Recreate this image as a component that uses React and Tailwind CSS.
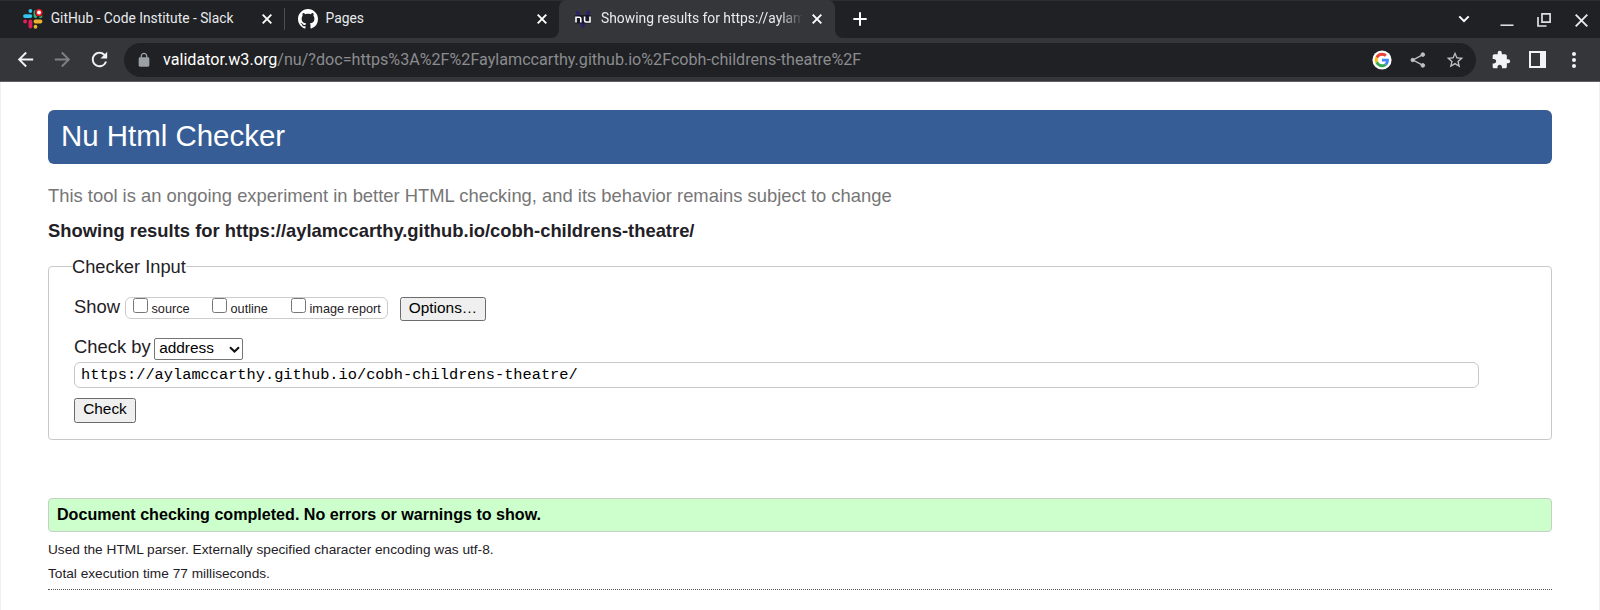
import React from "react";

const sans = "font-['Liberation_Sans',Arial,sans-serif]";

function CloseIcon() {
  return (
    <svg className="block shrink-0" width="10" height="10" viewBox="0 0 10 10" fill="none" stroke="#fff" strokeWidth="1.9">
      <path d="M0.7 0.7 9.3 9.3M9.3 0.7 0.7 9.3" />
    </svg>
  );
}

function SlackIcon() {
  return (
    <svg className="block shrink-0" width="20" height="20" viewBox="0 0 20 20">
      <g strokeWidth="3.8" strokeLinecap="round" fill="none">
        <path d="M7.4 2v.1M2 7.1h5.4" stroke="#36c5f0" />
        <path d="M12.5 3v4.1M17.4 7.1h.2" stroke="#2eb67d" />
        <path d="M12.5 12.5h5M12.5 17.7v.1" stroke="#ecb22e" />
        <path d="M7.4 12.5v5M2.1 12.5h.1" stroke="#e01e5a" />
      </g>
      <circle cx="16" cy="3.6" r="4.2" fill="#202124" />
      <circle cx="16" cy="3.6" r="2.8" fill="#fff" stroke="#f0141e" strokeWidth="1.6" />
    </svg>
  );
}

function GithubIcon() {
  return (
    <svg className="block shrink-0" width="20" height="20" viewBox="0 0 16 16" fill="#fff">
      <path d="M8 0C3.58 0 0 3.58 0 8c0 3.54 2.29 6.53 5.47 7.59.4.07.55-.17.55-.38 0-.19-.01-.82-.01-1.49-2.01.37-2.53-.49-2.69-.94-.09-.23-.48-.94-.82-1.13-.28-.15-.68-.52-.01-.53.63-.01 1.08.58 1.23.82.72 1.21 1.87.87 2.33.66.07-.52.28-.87.51-1.07-1.78-.2-3.64-.89-3.64-3.95 0-.87.31-1.59.82-2.15-.08-.2-.36-1.02.08-2.12 0 0 .67-.21 2.2.82.64-.18 1.32-.27 2-.27s1.36.09 2 .27c1.53-1.04 2.2-.82 2.2-.82.44 1.1.16 1.92.08 2.12.51.56.82 1.27.82 2.15 0 3.07-1.87 3.75-3.65 3.95.29.25.54.73.54 1.48 0 1.07-.01 1.93-.01 2.2 0 .21.15.46.55.38A8.01 8.01 0 0 0 16 8c0-4.42-3.58-8-8-8Z" />
    </svg>
  );
}

function NuIcon() {
  return (
    <svg className="block shrink-0" width="18" height="18" viewBox="0 0 18 18" fill="none">
      <path d="M3 1 9 15.5 15 1" stroke="#27236b" strokeWidth="3.2" />
      <path d="M1 5h16v8.5H1z" fill="#101018" opacity=".7" />
      <path d="M2 12.6V7.2h3.2q1.6 0 1.6 1.6v3.8M10.6 6.4v4.2q0 1.4 1.4 1.4h4V6.4" stroke="#fff" strokeWidth="1.6" />
    </svg>
  );
}

function GoogleIcon() {
  return (
    <svg className="block shrink-0" width="20" height="20" viewBox="0 0 20 20">
      <circle cx="10" cy="10" r="9.6" fill="#fff" />
      <g transform="translate(2.8 2.8) scale(.3)">
        <path fill="#ea4335" d="M24 9.5c3.54 0 6.71 1.22 9.21 3.6l6.85-6.85C35.9 2.38 30.47 0 24 0 14.62 0 6.51 5.38 2.56 13.22l7.98 6.19C12.43 13.72 17.74 9.5 24 9.5z" />
        <path fill="#4285f4" d="M46.98 24.55c0-1.57-.15-3.09-.38-4.55H24v9.02h12.94c-.58 2.96-2.26 5.48-4.78 7.18l7.73 6c4.51-4.18 7.09-10.36 7.09-17.65z" />
        <path fill="#fbbc05" d="M10.53 28.59c-.48-1.45-.76-2.99-.76-4.59s.27-3.14.76-4.59l-7.98-6.19C.92 16.46 0 20.12 0 24c0 3.88.92 7.54 2.56 10.78l7.97-6.19z" />
        <path fill="#34a853" d="M24 48c6.48 0 11.93-2.13 15.89-5.81l-7.73-6c-2.15 1.45-4.92 2.3-8.16 2.3-6.26 0-11.57-4.22-13.47-9.91l-7.98 6.19C6.51 42.62 14.62 48 24 48z" />
      </g>
    </svg>
  );
}

function MaterialIcon({ size, color, d, className = "" }) {
  return (
    <svg className={`block shrink-0 ${className}`} width={size} height={size} viewBox="0 0 24 24" fill={color}>
      <path d={d} />
    </svg>
  );
}

function TabBar() {
  return (
    <div className="flex h-[38px] border-t border-[#2d2e31] bg-[#202124] text-[13.85px] text-[#e8eaed]">
      <div className="flex h-[36px] w-[284px] items-center pr-[12px] pl-[23px]">
        <SlackIcon />
        <span className="ml-[7.7px] grow pb-[2px] text-[13.8px] whitespace-nowrap">GitHub - Code Institute - Slack</span>
        <CloseIcon />
      </div>
      <div className="mt-[7px] h-[22px] w-px bg-[#4d4e52]" />
      <div className="flex h-[36px] w-[274px] items-center pr-[12px] pl-[13px]">
        <GithubIcon />
        <span className="ml-[7.5px] grow pb-[2px] whitespace-nowrap">Pages</span>
        <CloseIcon />
      </div>
      <div className="relative -mt-px flex h-[38px] w-[276px] items-center rounded-t-[8px] bg-[#35363a] pr-[13px] pb-px pl-[15px]">
        <svg className="absolute bottom-0 -left-2" width="8" height="8" viewBox="0 0 8 8">
          <path d="M8 0v8H0A8 8 0 0 0 8 0Z" fill="#35363a" />
        </svg>
        <svg className="absolute -right-2 bottom-0" width="8" height="8" viewBox="0 0 8 8">
          <path d="M0 0v8h8A8 8 0 0 1 0 0Z" fill="#35363a" />
        </svg>
        <NuIcon />
        <span className="mr-[9px] ml-[9px] w-0 grow overflow-hidden [mask-image:linear-gradient(to_right,#000_88%,transparent)] whitespace-nowrap">
          Showing results for https://aylam
        </span>
        <CloseIcon />
      </div>
      <svg className="mt-[11px] ml-[18px] block" width="14" height="14" viewBox="0 0 14 14" stroke="#fff" strokeWidth="2">
        <path d="M7 .3v13.4M.3 7h13.4" />
      </svg>
      <div className="ml-auto flex h-[36px] items-center pr-[12px]">
        <svg className="mr-[30px] block" width="12" height="8" viewBox="0 0 12 8" fill="none" stroke="#fff" strokeWidth="2">
          <path d="M1.3 1.4 6 6.1l4.7-4.7" />
        </svg>
        <svg className="mr-[23px] block" width="14" height="14" viewBox="0 0 14 14">
          <path d="M.5 13.2h13" stroke="#e8eaed" strokeWidth="1.5" />
        </svg>
        <svg className="mt-[1px] mr-[24px] block" width="14" height="14" viewBox="0 0 14 14" fill="none" stroke="#dfe1e5" strokeWidth="1.7">
          <path d="M5 .9h8.1v8.2H5zM1 4v9h8.5" />
        </svg>
        <svg className="mt-[2px] block" width="13" height="13" viewBox="0 0 13 13" stroke="#e8eaed" strokeWidth="1.9">
          <path d="M.7.7 12.3 12.3M12.3.7.7 12.3" />
        </svg>
      </div>
    </div>
  );
}

function Toolbar() {
  return (
    <div className="flex h-[44px] items-center border-b border-[#606165] bg-[#35363a] pr-[15px] pl-[14px]">
      <MaterialIcon size={23} color="#f1f3f4" d="M20 11H7.83l5.59-5.59L12 4l-8 8 8 8 1.41-1.41L7.83 13H20v-2z" />
      <MaterialIcon size={23} color="#7f8084" className="ml-[14px]" d="m12 4-1.41 1.41L16.17 11H4v2h12.17l-5.58 5.59L12 20l8-8z" />
      <MaterialIcon size={23} color="#f1f3f4" className="ml-[14px]" d="M17.65 6.35A7.958 7.958 0 0 0 12 4c-4.42 0-7.99 3.58-7.99 8s3.57 8 7.99 8c3.73 0 6.84-2.55 7.73-6h-2.08A5.99 5.99 0 0 1 12 18c-3.31 0-6-2.69-6-6s2.69-6 6-6c1.66 0 3.14.69 4.22 1.78L13 11h7V4l-2.35 2.35z" />
      <div className="ml-[13px] flex h-[34px] w-[1352px] items-center rounded-full bg-[#202124] pr-[11px] pl-[12px]">
        <MaterialIcon size={16} color="#9aa0a6" d="M18 8h-1V6c0-2.76-2.24-5-5-5S7 3.24 7 6v2H6c-1.1 0-2 .9-2 2v10c0 1.1.9 2 2 2h12c1.1 0 2-.9 2-2V10c0-1.1-.9-2-2-2zM9 6c0-1.66 1.34-3 3-3s3 1.34 3 3v2H9V6z" />
        <div className="ml-[11px] grow text-[16.14px] leading-[20px] whitespace-nowrap text-[#8b8c8f]">
          <span className="text-[#fff]">validator.w3.org</span>
          /nu/?doc=https%3A%2F%2Faylamccarthy.github.io%2Fcobh-childrens-theatre%2F
        </div>
        <GoogleIcon />
        <svg className="ml-[18px] block shrink-0" width="16" height="16" viewBox="0 0 16 16" fill="#bdc1c6" stroke="#bdc1c6">
          <path d="M13 2.7 3 8l10 5.3" fill="none" strokeWidth="1.4" />
          <circle cx="12.8" cy="2.6" r="1.8" />
          <circle cx="2.7" cy="8" r="1.7" />
          <circle cx="12.8" cy="13.4" r="1.8" />
        </svg>
        <MaterialIcon size={20} color="#bdc1c6" className="ml-[19px]" d="m22 9.24-7.19-.62L12 2 9.19 8.63 2 9.24l5.46 4.73L5.82 21 12 17.27 18.18 21l-1.63-7.03L22 9.24zM12 15.4l-3.76 2.27 1-4.28-3.32-2.88 4.38-.38L12 6.1l1.71 4.04 4.38.38-3.32 2.88 1 4.28L12 15.4z" />
      </div>
      <MaterialIcon size={20} color="#f1f3f4" className="ml-[15px]" d="M20.5 11H19V7c0-1.1-.9-2-2-2h-4V3.5a2.5 2.5 0 0 0-5 0V5H4c-1.1 0-1.99.9-1.99 2v3.8H3.5c1.49 0 2.7 1.21 2.7 2.7s-1.21 2.7-2.7 2.7H2V20c0 1.1.9 2 2 2h3.8v-1.5c0-1.49 1.21-2.7 2.7-2.7s2.7 1.21 2.7 2.7V22H17c1.1 0 2-.9 2-2v-4h1.5a2.5 2.5 0 0 0 0-5z" />
      <svg className="ml-[18px] block" width="17" height="17" viewBox="0 0 17 17">
        <path fillRule="evenodd" fill="#f1f3f4" d="M0 0h17v17H0zM2 2v13h9V2z" />
      </svg>
      <svg className="ml-auto block" width="22" height="18" viewBox="0 0 22 18" fill="#f1f3f4">
        <circle cx="11" cy="3" r="2" />
        <circle cx="11" cy="9" r="2" />
        <circle cx="11" cy="15" r="2" />
      </svg>
    </div>
  );
}

function ShowOption({ label, className }) {
  return (
    <label className={`flex ${className}`}>
      <input type="checkbox" className="h-[15px] w-[15px] appearance-none rounded-[2.5px] border border-[#767676] bg-white" />
      <span className="ml-[3.5px] pt-[2px] text-[12.7px] leading-[19px] whitespace-nowrap">{label}</span>
    </label>
  );
}

export default function App() {
  return (
    <div className="flex h-[610px] w-[1600px] flex-col overflow-hidden bg-white font-[Roboto,sans-serif]">
      <TabBar />
      <Toolbar />
      <main className={`grow border-x border-[#f0f0f1] px-[47px] pt-[28px] text-[18.4px] leading-[24px] text-[#1f2126] ${sans}`}>
        <h1 className="h-[54px] rounded-[6px] bg-[#365d95] pl-[13px] text-[29.44px] leading-[51px] text-white">Nu Html Checker</h1>
        <p className="mt-[20px] text-[#767676]">
          This tool is an ongoing experiment in better HTML checking, and its behavior remains subject to change
        </p>
        <h2 className="mt-[11px] font-bold">Showing results for https://aylamccarthy.github.io/cobh-childrens-theatre/</h2>
        <fieldset className="mt-[12px] h-[185px] rounded-[4px] border border-[#c8c8c8] pr-[72px] pl-[25px]">
          <legend className="-ml-[2px] h-[22px] text-[18.3px] leading-[24px]">Checker Input</legend>
          <div className="mt-[17px] flex h-[26px] items-start">
            <span className="pt-[1px]">Show</span>
            <div className="mt-[3px] ml-[5px] flex h-[22px] w-[263px] rounded-[6px] border border-[#ccc] pl-[7px]">
              <ShowOption label="source" className="w-[79px]" />
              <ShowOption label="outline" className="w-[79px]" />
              <ShowOption label="image report" className="" />
            </div>
            <button className="mt-[3px] ml-[12px] h-[24px] w-[86px] rounded-[2.5px] border border-[#6b6b6b] bg-[#efefef] pb-[3px] text-[15.4px] leading-[17px] text-black">
              Options…
            </button>
          </div>
          <div className="mt-[15px] flex h-[27px] items-start">
            <span className="whitespace-nowrap">Check by</span>
            <div className="mt-[3px] ml-[3px] flex h-[22px] w-[89px] items-center justify-between rounded-[2px] border border-[#767676] bg-white pr-[2px] pb-[2px] pl-[4.5px] text-[15.4px] leading-[18px] text-black">
              address
              <svg className="mt-[2px] block" width="11" height="7" viewBox="0 0 11 7" fill="none" stroke="#101010" strokeWidth="2">
                <path d="M1 1.2 5.5 5.5 10 1.2" />
              </svg>
            </div>
          </div>
          <input
            readOnly
            value="https://aylamccarthy.github.io/cobh-childrens-theatre/"
            className="block h-[26px] w-full rounded-[6px] border border-[#c8c8c8] px-[6px] font-['Liberation_Mono',monospace] text-[15.33px] text-black"
          />
          <button className="mt-[10px] block h-[25px] w-[62px] rounded-[2.5px] border border-[#6b6b6b] bg-[#efefef] pb-[4px] text-[15.4px] leading-[17px] text-black">
            Check
          </button>
        </fieldset>
        <p className="mt-[58px] h-[34px] rounded-[4px] border border-[#c5cfc5] bg-[#ccffcc] pl-[8px] text-[16.1px] leading-[31px] font-bold text-black">
          Document checking completed. No errors or warnings to show.
        </p>
        <div className="mt-[6px] h-[52px] border-b border-dotted border-[#555] text-[13.68px] leading-[24px]">
          <p>Used the HTML parser. Externally specified character encoding was utf-8.</p>
          <p>Total execution time 77 milliseconds.</p>
        </div>
      </main>
    </div>
  );
}
